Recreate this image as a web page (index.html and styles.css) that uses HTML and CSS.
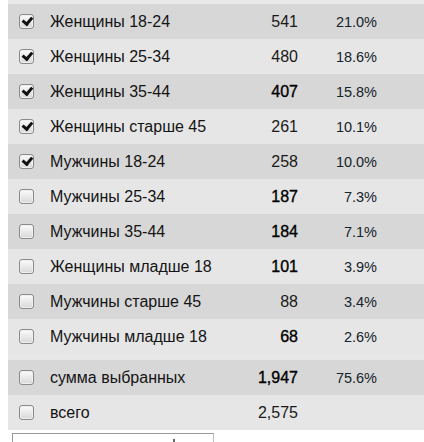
FILE: index.html
```html
<!DOCTYPE html>
<html lang="ru">
<head>
<meta charset="utf-8">
<link rel="stylesheet" href="styles.css">
</head>
<body>
<div class="panel">
  <div class="top-band"></div>
  <div class="row dark"><span class="cb checked"></span><span class="label">Женщины 18-24</span><span class="num">541</span><span class="pct">21.0%</span></div>
  <div class="row light"><span class="cb checked"></span><span class="label">Женщины 25-34</span><span class="num">480</span><span class="pct">18.6%</span></div>
  <div class="row dark"><span class="cb checked"></span><span class="label">Женщины 35-44</span><span class="num strong">407</span><span class="pct">15.8%</span></div>
  <div class="row light"><span class="cb checked"></span><span class="label">Женщины старше 45</span><span class="num">261</span><span class="pct">10.1%</span></div>
  <div class="row dark"><span class="cb checked"></span><span class="label">Мужчины 18-24</span><span class="num">258</span><span class="pct">10.0%</span></div>
  <div class="row light"><span class="cb"></span><span class="label">Мужчины 25-34</span><span class="num strong">187</span><span class="pct">7.3%</span></div>
  <div class="row dark"><span class="cb"></span><span class="label">Мужчины 35-44</span><span class="num strong">184</span><span class="pct">7.1%</span></div>
  <div class="row light"><span class="cb"></span><span class="label">Женщины младше 18</span><span class="num strong">101</span><span class="pct">3.9%</span></div>
  <div class="row dark"><span class="cb"></span><span class="label">Мужчины старше 45</span><span class="num">88</span><span class="pct">3.4%</span></div>
  <div class="row light"><span class="cb"></span><span class="label">Мужчины младше 18</span><span class="num strong">68</span><span class="pct">2.6%</span></div>
  <div class="gap"></div>
  <div class="row dark"><span class="cb"></span><span class="label">сумма выбранных</span><span class="num strong">1,947</span><span class="pct">75.6%</span></div>
  <div class="row light"><span class="cb"></span><span class="label">всего</span><span class="num">2,575</span><span class="pct"></span></div>
</div>
<div class="below">
  <div class="select-box"><span class="tick"></span></div>
</div>
</body>
</html>
```
FILE: styles.css
```css
html, body {
  margin: 0;
  padding: 0;
  background: #ffffff;
}
body {
  font-family: "Liberation Sans", Arial, sans-serif;
  font-size: 16px;
  color: #141414;
  width: 424px;
  height: 442px;
  overflow: hidden;
}
.panel {
  margin-left: 8px;
  background: #e6e6e6;
}
.top-band {
  height: 4px;
  background: #e9e9e9;
}
.gap {
  height: 6px;
  background: #e8e8e8;
}
.row {
  display: grid;
  grid-template-columns: 15px 204px 60px 79px 47px;
  padding-left: 11px;
  align-items: center;
  height: 35px;
}
.row.dark {
  background: #d7d7d7;
}
.row.light {
  background: #e6e6e6;
}
.label {
  margin-left: 16px;
  white-space: nowrap;
}
.num {
  text-align: right;
  color: #1a1a1a;
}
.num.strong {
  color: #000;
  -webkit-text-stroke: 0.35px #000;
}
.pct {
  text-align: right;
  font-size: 14.5px;
  color: #15232a;
}
.cb {
  position: relative;
  box-sizing: border-box;
  width: 15px;
  height: 15px;
  border: 1.5px solid #8a8a8a;
  border-radius: 3px;
  background: linear-gradient(#fbfbfb, #d8d8d8);
  box-shadow: inset 0 0 0 1px #f0f0f0;
}
.cb.checked::after {
  content: "";
  position: absolute;
  left: 3.5px;
  top: 0px;
  width: 3.5px;
  height: 7px;
  border-right: 3px solid #111;
  border-bottom: 3px solid #111;
  transform: rotate(40deg);
}
.below {
  padding-top: 3px;
  padding-left: 12px;
}
.select-box {
  position: relative;
  width: 200px;
  height: 20px;
  border-top: 1px solid #9a9a9a;
  border-left: 1px solid #9a9a9a;
  border-right: 1px solid #bcbcbc;
}
.tick {
  position: absolute;
  left: 160px;
  top: 5px;
  width: 2px;
  height: 3px;
  background: #666;
}
```
